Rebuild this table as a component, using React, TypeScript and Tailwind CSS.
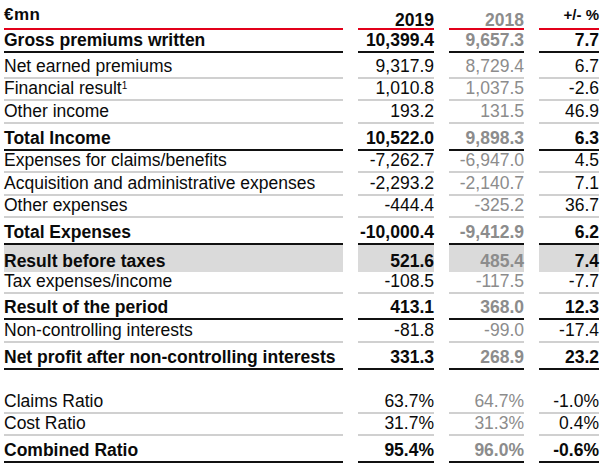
type Row = {
  label: string
  y19: string
  y18: string
  pct: string
  h: string
  bold?: boolean
  shade?: boolean
  sup?: string
}

const rows: Row[] = [
  { label: 'Gross premiums written', y19: '10,399.4', y18: '9,657.3', pct: '7.7', h: 'h-[23px]', bold: true },
  { label: 'Net earned premiums', y19: '9,317.9', y18: '8,729.4', pct: '6.7', h: 'h-[26px]' },
  { label: 'Financial result', sup: '1', y19: '1,010.8', y18: '1,037.5', pct: '-2.6', h: 'h-[22px]' },
  { label: 'Other income', y19: '193.2', y18: '131.5', pct: '46.9', h: 'h-[23px]' },
  { label: 'Total Income', y19: '10,522.0', y18: '9,898.3', pct: '6.3', h: 'h-[27px]', bold: true },
  { label: 'Expenses for claims/benefits', y19: '-7,262.7', y18: '-6,947.0', pct: '4.5', h: 'h-[22px]' },
  { label: 'Acquisition and administrative expenses', y19: '-2,293.2', y18: '-2,140.7', pct: '7.1', h: 'h-[23px]' },
  { label: 'Other expenses', y19: '-444.4', y18: '-325.2', pct: '36.7', h: 'h-[22px]' },
  { label: 'Total Expenses', y19: '-10,000.4', y18: '-9,412.9', pct: '6.2', h: 'h-[27px]', bold: true },
  { label: 'Result before taxes', y19: '521.6', y18: '485.4', pct: '7.4', h: 'h-[27px]', bold: true, shade: true },
  { label: 'Tax expenses/income', y19: '-108.5', y18: '-117.5', pct: '-7.7', h: 'h-[22px]' },
  { label: 'Result of the period', y19: '413.1', y18: '368.0', pct: '12.3', h: 'h-[26px]', bold: true },
  { label: 'Non-controlling interests', y19: '-81.8', y18: '-99.0', pct: '-17.4', h: 'h-[23px]' },
  { label: 'Net profit after non-controlling interests', y19: '331.3', y18: '268.9', pct: '23.2', h: 'h-[27px]', bold: true },
]

const ratios: Row[] = [
  { label: 'Claims Ratio', y19: '63.7%', y18: '64.7%', pct: '-1.0%', h: 'h-[23px]' },
  { label: 'Cost Ratio', y19: '31.7%', y18: '31.3%', pct: '0.4%', h: 'h-[22px]' },
  { label: 'Combined Ratio', y19: '95.4%', y18: '96.0%', pct: '-0.6%', h: 'h-[27px]', bold: true },
]

const grid = 'grid grid-cols-[339px_76px_75px_60px] gap-x-[15px]'

function TableRow({ row }: { row: Row }) {
  const line = row.shade
    ? 'bg-[#dadada]'
    : row.bold
      ? 'border-b-2 border-[#111]'
      : 'border-b-2 border-[#d0d0d0]'
  const cell = `flex items-end pb-[1px] leading-[20px] ${row.h} ${line} ${row.bold ? 'font-bold' : ''}`

  return (
    <div className={grid}>
      <div className={cell}>
        <span>
          {row.label}
          {row.sup && <sup className="text-[10px] font-normal">{row.sup}</sup>}
        </span>
      </div>
      <div className={`${cell} justify-end`}>{row.y19}</div>
      <div className={`${cell} justify-end text-[#8c8c8c]`}>{row.y18}</div>
      <div className={`${cell} justify-end`}>{row.pct}</div>
    </div>
  )
}

export default function App() {
  return (
    <div className="w-[606px] h-[469px] bg-white pl-[4px] text-[17.5px] text-[#0a0a0a] font-['Liberation_Sans',Arial,sans-serif]">
      <div className={grid}>
        <div className="h-[30px] border-b-2 border-[#e2001a] font-bold text-[17px] tracking-[0.5px] leading-[18px] pt-[6px]">€mn</div>
        <div className="h-[30px] border-b-2 border-[#e2001a] font-bold flex items-end justify-end leading-[16px]">2019</div>
        <div className="h-[30px] border-b-2 border-[#e2001a] font-bold flex items-end justify-end leading-[16px] text-[#8c8c8c]">2018</div>
        <div className="h-[30px] border-b-2 border-[#e2001a] font-bold text-[15px] leading-[18px] pt-[6px] text-right">+/- %</div>
      </div>

      {rows.map((r) => (
        <TableRow key={r.label} row={r} />
      ))}

      <div className="h-[21px]" />

      {ratios.map((r) => (
        <TableRow key={r.label} row={r} />
      ))}
    </div>
  )
}
